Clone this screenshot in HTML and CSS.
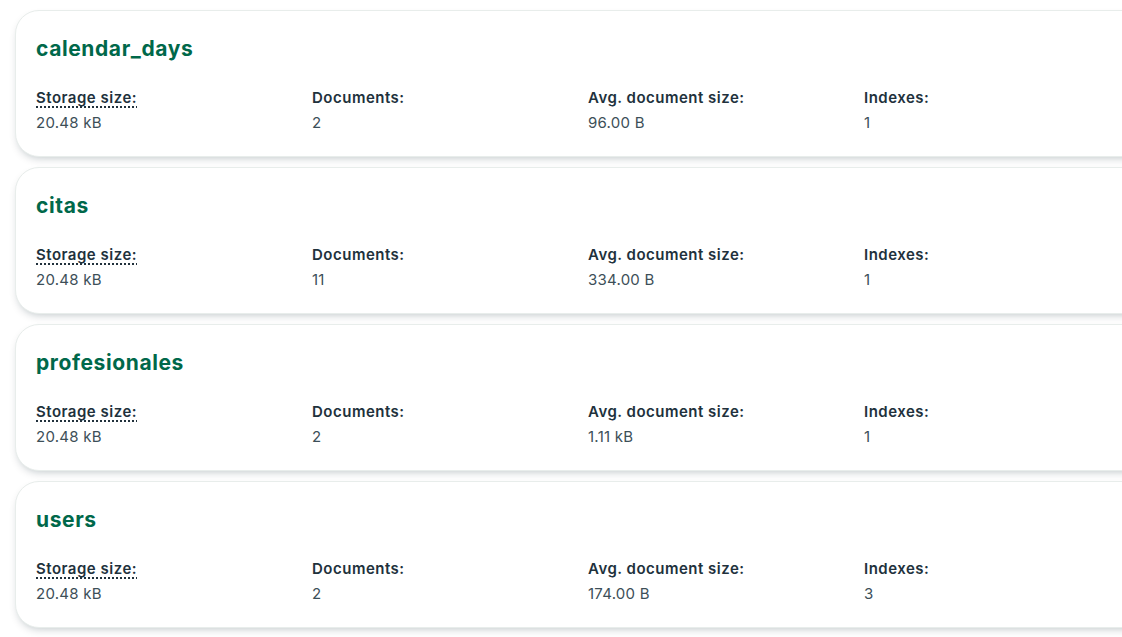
FILE: index.html
```html
<!DOCTYPE html>
<html>
<head>
<meta charset="utf-8">
<link rel="stylesheet" href="styles.css">
</head>
<body>
<div class="list">
  <div class="card">
    <div class="title">calendar_days</div>
    <div class="stats">
      <div class="stat"><div class="label dotted">Storage size:</div><div class="value">20.48 kB</div></div>
      <div class="stat"><div class="label">Documents:</div><div class="value">2</div></div>
      <div class="stat"><div class="label">Avg. document size:</div><div class="value">96.00 B</div></div>
      <div class="stat"><div class="label">Indexes:</div><div class="value">1</div></div>
    </div>
  </div>
  <div class="card">
    <div class="title">citas</div>
    <div class="stats">
      <div class="stat"><div class="label dotted">Storage size:</div><div class="value">20.48 kB</div></div>
      <div class="stat"><div class="label">Documents:</div><div class="value">11</div></div>
      <div class="stat"><div class="label">Avg. document size:</div><div class="value">334.00 B</div></div>
      <div class="stat"><div class="label">Indexes:</div><div class="value">1</div></div>
    </div>
  </div>
  <div class="card">
    <div class="title">profesionales</div>
    <div class="stats">
      <div class="stat"><div class="label dotted">Storage size:</div><div class="value">20.48 kB</div></div>
      <div class="stat"><div class="label">Documents:</div><div class="value">2</div></div>
      <div class="stat"><div class="label">Avg. document size:</div><div class="value">1.11 kB</div></div>
      <div class="stat"><div class="label">Indexes:</div><div class="value">1</div></div>
    </div>
  </div>
  <div class="card">
    <div class="title">users</div>
    <div class="stats">
      <div class="stat"><div class="label dotted">Storage size:</div><div class="value">20.48 kB</div></div>
      <div class="stat"><div class="label">Documents:</div><div class="value">2</div></div>
      <div class="stat"><div class="label">Avg. document size:</div><div class="value">174.00 B</div></div>
      <div class="stat"><div class="label">Indexes:</div><div class="value">3</div></div>
    </div>
  </div>
</div>
</body>
</html>
```
FILE: styles.css
```css
html, body {
  margin: 0;
  padding: 0;
  background: #ffffff;
  overflow: hidden;
}
body {
  font-family: "Inter", "Lato", sans-serif;
  width: 1122px;
  height: 637px;
}
.list {
  display: flex;
  flex-direction: column;
  gap: 10px;
  padding: 10px 0 0 15px;
}
.card {
  width: 1150px;
  box-sizing: border-box;
  height: 147px;
  border: 1px solid #e8edeb;
  border-radius: 24px;
  background: #fff;
  padding: 24px 20px 23px 20px;
  box-shadow: 0 4px 10px -4px rgba(0, 30, 43, 0.3);
}
.title {
  font-size: 21px;
  line-height: 28px;
  font-weight: 700;
  letter-spacing: 0.6px;
  color: #00684a;
}
.stats {
  display: grid;
  grid-template-columns: repeat(4, 276px);
  margin-top: 25px;
}
.label {
  font-size: 15px;
  line-height: 20px;
  font-weight: 600;
  letter-spacing: 0.5px;
  color: #21313c;
}
.stat {
  display: flex;
  flex-direction: column;
  align-items: flex-start;
}
.dotted {
  text-decoration: underline dotted #21313c 2px;
  text-underline-offset: 3px;
}
.value {
  margin-top: 5px;
  font-size: 15px;
  line-height: 20px;
  letter-spacing: 0.25px;
  color: #3d4f58;
}
```
